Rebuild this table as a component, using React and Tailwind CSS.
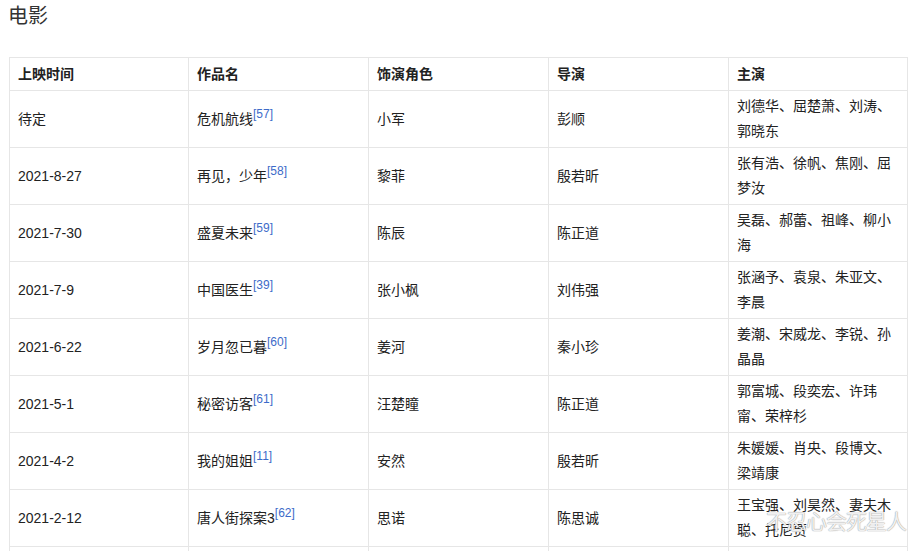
import React from 'react';

const rows = [
  { date: '待定', title: '危机航线', ref: '57', role: '小军', director: '彭顺', cast: '刘德华、屈楚萧、刘涛、郭晓东' },
  { date: '2021-8-27', title: '再见，少年', ref: '58', role: '黎菲', director: '殷若昕', cast: '张有浩、徐帆、焦刚、屈梦汝' },
  { date: '2021-7-30', title: '盛夏未来', ref: '59', role: '陈辰', director: '陈正道', cast: '吴磊、郝蕾、祖峰、柳小海' },
  { date: '2021-7-9', title: '中国医生', ref: '39', role: '张小枫', director: '刘伟强', cast: '张涵予、袁泉、朱亚文、李晨' },
  { date: '2021-6-22', title: '岁月忽已暮', ref: '60', role: '姜河', director: '秦小珍', cast: '姜潮、宋威龙、李锐、孙晶晶' },
  { date: '2021-5-1', title: '秘密访客', ref: '61', role: '汪楚瞳', director: '陈正道', cast: '郭富城、段奕宏、许玮甯、荣梓杉' },
  { date: '2021-4-2', title: '我的姐姐', ref: '11', role: '安然', director: '殷若昕', cast: '朱媛媛、肖央、段博文、梁靖康' },
  { date: '2021-2-12', title: '唐人街探案3', ref: '62', role: '思诺', director: '陈思诚', cast: '王宝强、刘昊然、妻夫木聪、托尼贾' },
];

const headers = ['上映时间', '作品名', '饰演角色', '导演', '主演'];

const cell = 'flex items-center px-2 border-r border-b border-[#e6e6e6] leading-[25px]';

const App = () => {
  return (
    <div
      className="relative h-[551px] overflow-hidden bg-white pl-2 text-[14px] text-[#222]"
      style={{ fontFamily: '"Liberation Sans", Arial, "Noto Sans CJK SC", sans-serif' }}
    >
      <h2 className="pt-[2px] text-[20px] leading-[28px] text-[#333] font-normal">电影</h2>

      <div className="mt-[27px] ml-px w-[899px] grid grid-cols-[179px_180px_180px_180px_179px] border-l border-t border-[#e6e6e6]">
        {headers.map((h) => (
          <div key={h} className={`${cell} h-[33px] font-bold`}>
            {h}
          </div>
        ))}
        {rows.map((row) => (
          <React.Fragment key={row.title}>
            <div className={`${cell} h-[57px]`}>{row.date}</div>
            <div className={`${cell} h-[57px]`}>
              <span>
                {row.title}
                <sup className="relative -top-[6px] text-[12px] text-[#3d6bc9]">[{row.ref}]</sup>
              </span>
            </div>
            <div className={`${cell} h-[57px]`}>{row.role}</div>
            <div className={`${cell} h-[57px]`}>{row.director}</div>
            <div className={`${cell} h-[57px]`}>{row.cast}</div>
          </React.Fragment>
        ))}
        {/* next row starts just below the fold */}
        {headers.map((h) => (
          <div key={`next-${h}`} className={`${cell} h-[57px]`} />
        ))}
      </div>

      <div
        className="absolute right-[6px] top-[508px] text-[21px] leading-[28px] tracking-[-1px] text-white/85"
        style={{ textShadow: '0 0 1px #999, 0 0 1px #aaa' }}
      >
        不忍心会死星人
      </div>
    </div>
  );
};

export default App;
